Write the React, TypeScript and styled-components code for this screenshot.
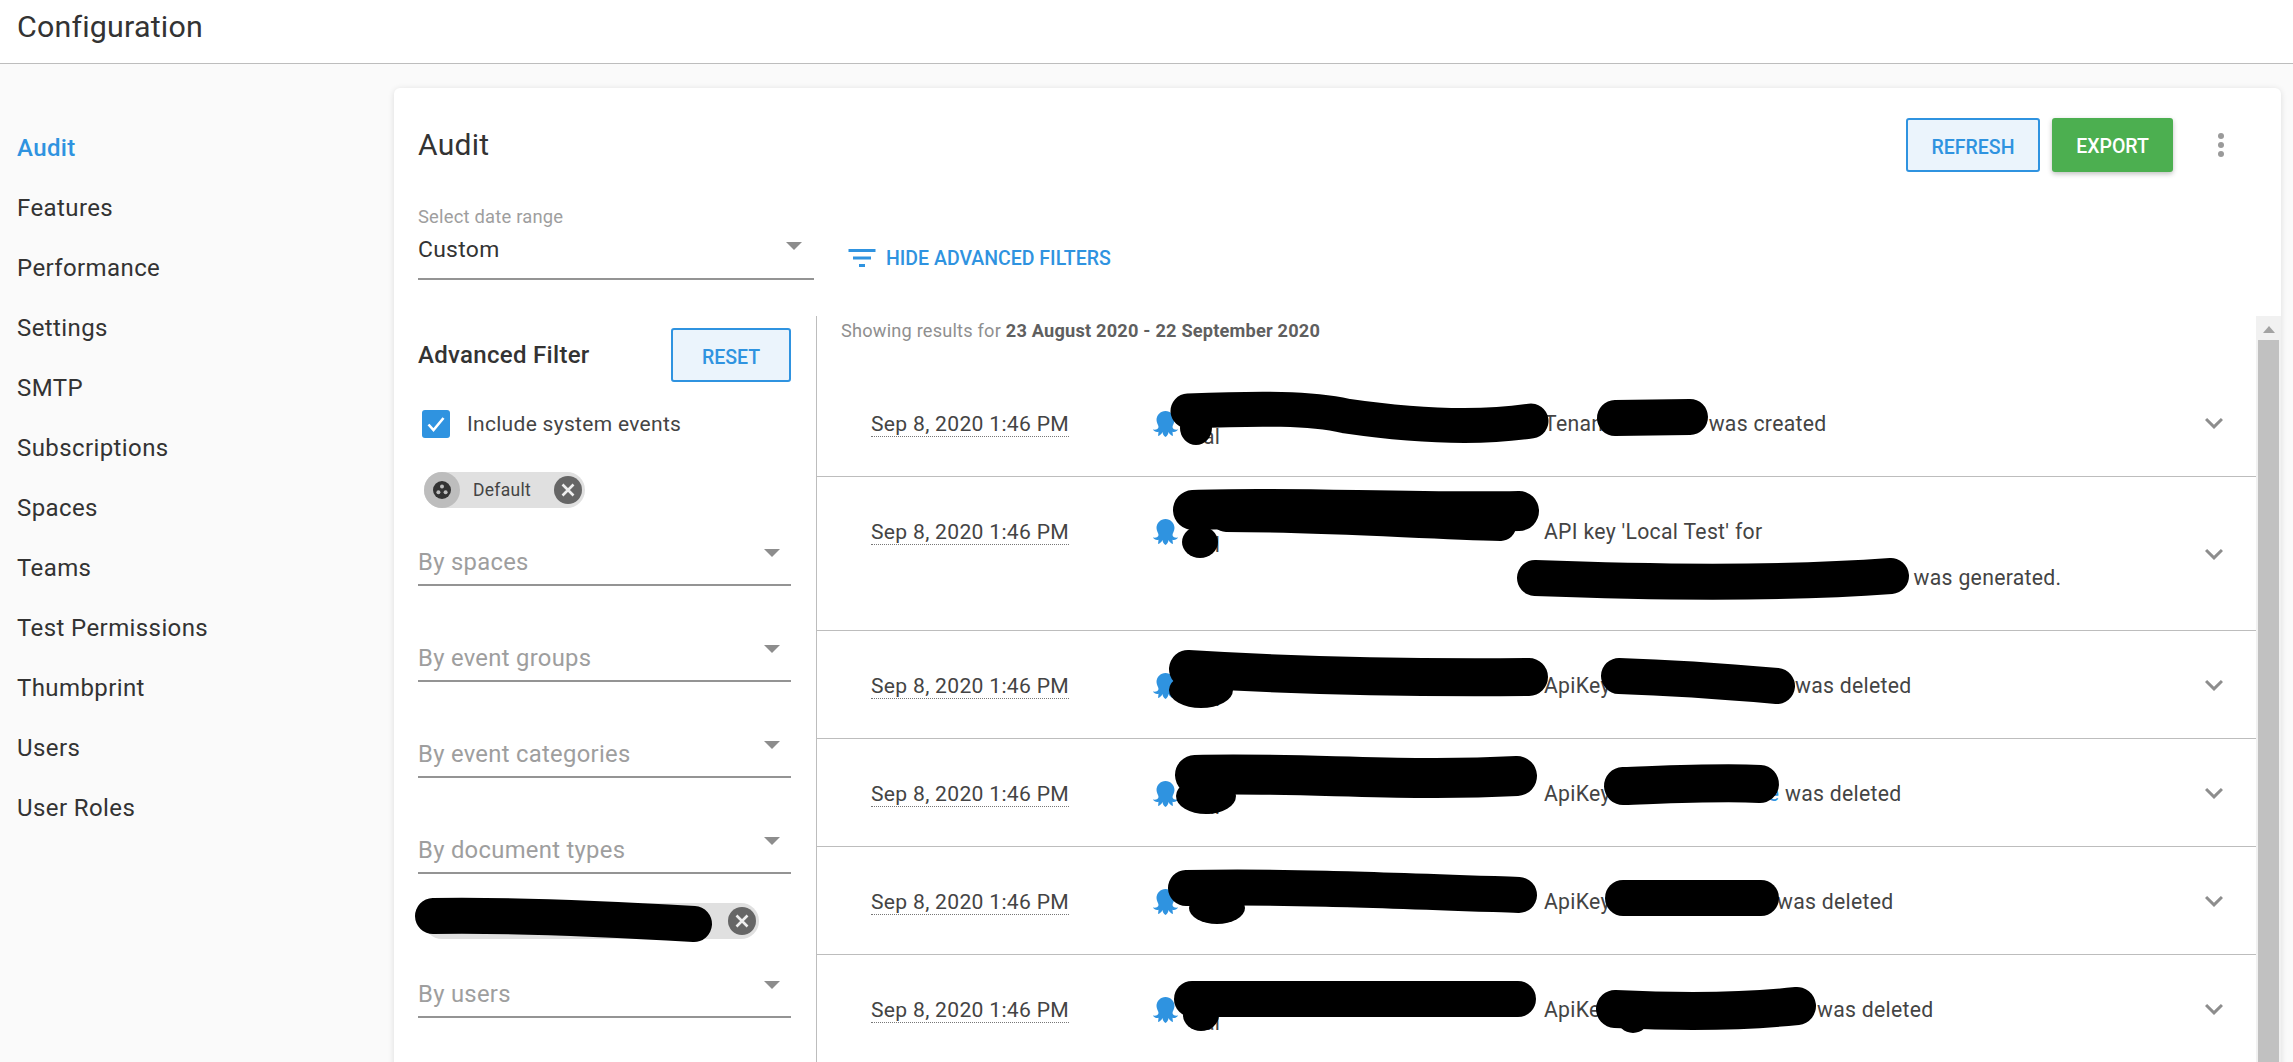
import React from "react";
import styled, { createGlobalStyle } from "styled-components";

const GlobalStyle = createGlobalStyle`
  html, body { margin: 0; padding: 0; height: 1062px; overflow: hidden; background: #fafafa; }
  body { font-family: Roboto, "Liberation Sans", sans-serif; color: #333; }
  * { box-sizing: border-box; }
`;

const Page = styled.div`
  height: 1062px;
  overflow: hidden;
  display: flex;
  flex-direction: column;
`;
const TopBar = styled.header`
  flex: none;
  height: 64px;
  background: #fff;
  border-bottom: 1px solid #bdbdbd;
  padding: 0 17px;
  display: flex;
  align-items: center;
  padding-bottom: 10px;
`;
const PageTitle = styled.h1`
  margin: 0;
  font-size: 30.4px;
  font-weight: 400;
  letter-spacing: 0.2px;
  color: #333;
`;
const Body = styled.div`
  flex: 1;
  display: flex;
  min-height: 0;
`;
const Nav = styled.nav`
  flex: none;
  width: 394px;
  padding-top: 54px;
  display: flex;
  flex-direction: column;
`;
const NavItem = styled.a<{ $active?: boolean }>`
  height: 60px;
  padding-left: 17px;
  display: flex;
  align-items: center;
  font-size: 24px;
  letter-spacing: 0.4px;
  color: ${(p) => (p.$active ? "#2f93e0" : "#333")};
  font-weight: ${(p) => (p.$active ? 500 : 400)};
`;
const Card = styled.main`
  flex: none;
  width: 1887px;
  margin-top: 24px;
  height: 1100px;
  background: #fff;
  border-radius: 6px;
  box-shadow: 0 1px 6px rgba(0, 0, 0, 0.12);
  display: flex;
  flex-direction: column;
`;
const CardHead = styled.div`
  flex: none;
  height: 54px;
  margin-top: 30px;
  padding: 0 57px 0 24px;
  display: flex;
  align-items: center;
`;
const CardTitle = styled.h2`
  margin: 0 auto 0 0;
  font-size: 30px;
  font-weight: 400;
  letter-spacing: 0.3px;
  color: #333;
  position: relative;
  top: -1px;
`;
const OutlineButton = styled.button`
  height: 54px;
  border: 2px solid #2f93e0;
  border-radius: 3px;
  background: #ebf4fc;
  color: #2f93e0;
  font: 500 19.5px Roboto, sans-serif;
  padding: 4px 0 0;
`;
const RefreshButton = styled(OutlineButton)`
  width: 134px;
`;
const ExportButton = styled.button`
  width: 121px;
  height: 54px;
  margin-left: 12px;
  border: 0;
  border-radius: 3px;
  background: #4caf50;
  color: #fff;
  font: 500 19.5px Roboto, sans-serif;
  box-shadow: 0 2px 5px rgba(0, 0, 0, 0.25);
  padding: 2px 0 0;
`;
const MoreButton = styled.div`
  width: 6px;
  margin-left: 45px;
  display: flex;
  flex-direction: column;
  gap: 3px;
`;
const MoreDot = styled.span`
  width: 6px;
  height: 6px;
  border-radius: 50%;
  background: #9a9a9a;
`;
const RangeRow = styled.div`
  flex: none;
  height: 144px;
  padding: 33px 0 0 24px;
  display: flex;
  align-items: flex-start;
`;
const RangeSelect = styled.div`
  width: 396px;
  height: 75px;
  border-bottom: 2px solid #949494;
  position: relative;
`;
const RangeLabel = styled.div`
  font-size: 18.4px;
  line-height: 24px;
  letter-spacing: 0.2px;
  color: #9e9e9e;
`;
const RangeValue = styled.div`
  font-size: 22.9px;
  line-height: 30px;
  margin-top: 6px;
  letter-spacing: 0.3px;
  color: #333;
`;
const RangeArrow = styled.span`
  position: absolute;
  right: 12px;
  top: 37px;
  width: 0;
  height: 0;
  border-left: 8px solid transparent;
  border-right: 8px solid transparent;
  border-top: 8px solid #8d8d8d;
`;
const HideFilters = styled.div`
  margin: 35px 0 0 30px;
  height: 36px;
  display: flex;
  align-items: center;
  gap: 6px;
  color: #2f93e0;
  font-size: 19.5px;
  font-weight: 500;
  text-transform: uppercase;
`;
const Content = styled.div`
  flex: 1;
  min-height: 0;
  display: flex;
`;
const FilterPanel = styled.aside`
  flex: none;
  width: 422px;
  padding: 12px 25px 0 24px;
`;
const FilterHead = styled.div`
  height: 54px;
  display: flex;
  align-items: center;
  justify-content: space-between;
`;
const FilterTitle = styled.div`
  font-size: 24px;
  font-weight: 500;
  letter-spacing: 0.3px;
  color: #333;
`;
const ResetButton = styled(OutlineButton)`
  width: 120px;
`;
const CheckRow = styled.label`
  margin: 28px 0 0 4px;
  height: 28px;
  display: flex;
  align-items: center;
  gap: 17px;
  font-size: 21px;
  letter-spacing: 0.3px;
  color: #444;
`;
const CheckBox = styled.span`
  width: 28px;
  height: 28px;
  border-radius: 3px;
  background: #2f93e0;
  display: flex;
  align-items: center;
  justify-content: center;
`;
const Chip = styled.div<{ $width: number }>`
  width: ${(p) => p.$width}px;
  height: 36px;
  margin-left: 6px;
  border-radius: 18px;
  background: #e0e0e0;
  display: flex;
  align-items: center;
  font-size: 17.5px;
  letter-spacing: 0.3px;
  color: #444;
`;
const DefaultChip = styled(Chip)`
  margin-top: 34px;
`;
const TenantChip = styled(Chip)`
  margin-top: 29px;
  position: relative;
`;
const ChipAvatar = styled.span`
  width: 36px;
  height: 36px;
  border-radius: 50%;
  background: #bdbdbd;
  display: flex;
  align-items: center;
  justify-content: center;
  margin-right: 13px;
`;
const ChipRemove = styled.span`
  margin-left: auto;
  margin-right: 3px;
  display: flex;
`;
const Field = styled.div<{ $gap: number }>`
  height: 60px;
  margin-top: ${(p) => p.$gap}px;
  border-bottom: 2px solid #949494;
  position: relative;
  display: flex;
  align-items: flex-end;
`;
const FieldText = styled.div`
  font-size: 23.8px;
  line-height: 30px;
  padding-bottom: 7px;
  letter-spacing: 0.3px;
  color: #9e9e9e;
`;
const FieldArrow = styled(RangeArrow)`
  right: 11px;
  top: 23px;
`;
const Blackout = styled.svg`
  position: absolute;
  pointer-events: none;
  overflow: visible;
`;
const ChipBlackout = styled(Blackout)`
  left: -10px;
  top: -7px;
`;
const Results = styled.section`
  flex: none;
  width: 1465px;
  display: flex;
  border-left: 1px solid #bdbdbd;
  min-height: 0;
`;
const ResultList = styled.div`
  flex: 1;
  min-width: 0;
`;
const ResultCaption = styled.div`
  height: 53px;
  padding: 3px 0 0 24px;
  font-size: 18.2px;
  line-height: 24px;
  letter-spacing: 0.2px;
  color: #8f8f8f;
  b {
    font-weight: 700;
    color: #5f5f5f;
  }
`;
const EventRow = styled.div<{ $height: number }>`
  position: relative;
  height: ${(p) => p.$height}px;
  border-bottom: 1px solid #bdbdbd;
  display: grid;
  grid-template-columns: 336px 391px 1fr 84px;
`;
const DateCell = styled.div`
  padding: 43px 0 0 54px;
`;
const DateText = styled.span`
  font-size: 21.1px;
  line-height: 24px;
  display: inline-block;
  letter-spacing: 0.3px;
  color: #444;
  border-bottom: 1px dotted #777;
`;
const ActorCell = styled.div`
  padding-top: 42px;
  display: flex;
  align-items: flex-start;
`;
const ActorName = styled.span`
  font-size: 21.2px;
  line-height: 24px;
  margin: 14px 0 0 25px;
  color: #444;
  letter-spacing: 0.3px;
`;
const Message = styled.div`
  padding-top: 32px;
  font-size: 21.2px;
  line-height: 46px;
  letter-spacing: 0.3px;
  color: #444;
  white-space: nowrap;
`;
const Ident = styled.span<{ $width: number }>`
  display: inline-block;
  width: ${(p) => p.$width}px;
  text-align: right;
  color: #2f93e0;
  vertical-align: bottom;
`;
const ExpandCell = styled.div`
  display: flex;
  align-items: center;
  justify-content: center;
`;
const RowBlackout = styled(Blackout)`
  left: 0;
  top: 0;
`;
const ScrollTrack = styled.div`
  flex: none;
  width: 25px;
  background: #f1f1f1;
  display: flex;
  flex-direction: column;
  align-items: center;
`;
const ScrollUp = styled.span`
  margin: 10px 0 7px;
  width: 0;
  height: 0;
  border-left: 6px solid transparent;
  border-right: 6px solid transparent;
  border-bottom: 7px solid #a3a3a3;
`;
const ScrollThumb = styled.div`
  width: 21px;
  flex: 1;
  background: #c1c1c1;
`;

const Octopus = () => (
  <svg width="25" height="26" viewBox="0 0 25 26" style={{ flex: "none" }}>
    <path
      fill="#2f93e0"
      d="M12.5 0C17.5 0 21.5 4 21.5 9C21.5 12 19.5 14 19.5 16C19.5 18 22 19 25 18.5C24 20.5 21.5 21.5 19.5 20.8C19.5 22 19.8 23.5 20 25C18 24.5 16.5 23 15.5 21C15.3 23 14.5 24.8 12.5 26C10.5 24.8 9.7 23 9.5 21C8.5 23 7 24.5 5 25C5.2 23.5 5.5 22 5.5 20.8C3.5 21.5 1 20.5 0 18.5C3 19 5.5 18 5.5 16C5.5 14 3.5 12 3.5 9C3.5 4 7.5 0 12.5 0z"
    />
  </svg>
);

const Check = () => (
  <svg width="22" height="22" viewBox="0 0 22 22">
    <path d="M3.5 11.5l5 5.5L18.5 5" fill="none" stroke="#fff" strokeWidth="2.6" />
  </svg>
);

const SpaceGlyph = () => (
  <svg width="18" height="18" viewBox="0 0 18 18">
    <circle cx="9" cy="9" r="9" fill="#333" />
    <circle cx="9" cy="5.6" r="2" fill="#bdbdbd" />
    <circle cx="5.4" cy="11.2" r="2" fill="#bdbdbd" />
    <circle cx="12.6" cy="11.2" r="2" fill="#bdbdbd" />
  </svg>
);

const RemoveGlyph = () => (
  <svg width="28" height="28" viewBox="0 0 28 28">
    <circle cx="14" cy="14" r="14" fill="#666" />
    <path d="M8.5 8.5l11 11M19.5 8.5l-11 11" stroke="#eee" strokeWidth="2.6" />
  </svg>
);

const FilterGlyph = () => (
  <svg width="36" height="36" viewBox="0 0 24 24">
    <path fill="#2f93e0" d="M10 18h4v-2h-4v2zM3 6v2h18V6H3zm3 7h12v-2H6v2z" />
  </svg>
);

const ExpandMore = () => (
  <svg width="36" height="36" viewBox="0 0 24 24">
    <path fill="#8d8d8d" d="M16.59 8.59L12 13.17 7.41 8.59 6 10l6 6 6-6z" />
  </svg>
);

type Ink = { d: string; w: number } | { cx: number; cy: number; rx: number; ry: number };

const Ink = ({ top, height, marks }: { top: number; height: number; marks: Ink[] }) => (
  <RowBlackout width="1440" height={height} viewBox={`816 ${top} 1440 ${height}`}>
    {marks.map((m, i) =>
      "d" in m ? (
        <path key={i} d={m.d} fill="none" stroke="#000" strokeWidth={m.w} strokeLinecap="round" strokeLinejoin="round" />
      ) : (
        <ellipse key={i} cx={m.cx} cy={m.cy} rx={m.rx} ry={m.ry} fill="#000" />
      )
    )}
  </RowBlackout>
);

const navItems = [
  "Audit", "Features", "Performance", "Settings", "SMTP", "Subscriptions",
  "Spaces", "Teams", "Test Permissions", "Thumbprint", "Users", "User Roles",
];

const events: {
  top: number;
  height: number;
  message: React.ReactNode;
  marks: Ink[];
}[] = [
  {
    top: 369,
    height: 108,
    message: (
      <>
        Tenant <Ident $width={87}>&nbsp;</Ident> was created
      </>
    ),
    marks: [
      { d: "M1187 411C1260 408 1310 408 1345 416C1400 424 1470 430 1530 421", w: 35 },
      { cx: 1195, cy: 428, rx: 16, ry: 17 },
      { d: "M1614 418L1689 417", w: 36 },
    ],
  },
  {
    top: 477,
    height: 154,
    message: (
      <>
        API key 'Local Test' for
        <br />
        <Ident $width={364}>&nbsp;</Ident> was generated.
      </>
    ),
    marks: [
      { d: "M1192 510C1280 506 1400 513 1518 511", w: 40 },
      { d: "M1225 517C1320 517 1420 524 1500 526", w: 30 },
      { cx: 1199, cy: 542, rx: 18, ry: 16 },
      { d: "M1534 578C1640 582 1780 584 1890 576", w: 36 },
    ],
  },
  {
    top: 631,
    height: 108,
    message: (
      <>
        ApiKey <Ident $width={173}>&nbsp;</Ident> was deleted
      </>
    ),
    marks: [
      { d: "M1187 669C1300 676 1420 678 1528 677", w: 38 },
      { cx: 1200, cy: 690, rx: 32, ry: 18 },
      { d: "M1618 676C1680 678 1730 682 1776 686", w: 36 },
    ],
  },
  {
    top: 739,
    height: 108,
    message: (
      <>
        ApiKey <Ident $width={163}>e</Ident> was deleted
      </>
    ),
    marks: [
      { d: "M1194 775C1300 772 1400 782 1516 776", w: 40 },
      { cx: 1205, cy: 796, rx: 30, ry: 18 },
      { d: "M1622 786C1680 784 1720 782 1759 784", w: 38 },
    ],
  },
  {
    top: 847,
    height: 108,
    message: (
      <>
        ApiKey <Ident $width={155}>&nbsp;</Ident> was deleted
      </>
    ),
    marks: [
      { d: "M1185 888C1280 886 1380 890 1518 895", w: 36 },
      { cx: 1216, cy: 908, rx: 28, ry: 16 },
      { d: "M1622 898L1760 898", w: 36 },
    ],
  },
  {
    top: 955,
    height: 108,
    message: (
      <>
        ApiKey <Ident $width={195}>&nbsp;</Ident> was deleted
      </>
    ),
    marks: [
      { d: "M1191 999L1517 999", w: 36 },
      { cx: 1200, cy: 1015, rx: 18, ry: 16 },
      { d: "M1614 1009C1680 1012 1740 1012 1796 1006", w: 38 },
      { cx: 1632, cy: 1018, rx: 16, ry: 15 },
    ],
  },
];

export default function App() {
  return (
    <Page>
      <GlobalStyle />
      <TopBar>
        <PageTitle>Configuration</PageTitle>
      </TopBar>
      <Body>
        <Nav>
          {navItems.map((n, i) => (
            <NavItem key={n} $active={i === 0}>
              {n}
            </NavItem>
          ))}
        </Nav>
        <Card>
          <CardHead>
            <CardTitle>Audit</CardTitle>
            <RefreshButton>REFRESH</RefreshButton>
            <ExportButton>EXPORT</ExportButton>
            <MoreButton>
              <MoreDot />
              <MoreDot />
              <MoreDot />
            </MoreButton>
          </CardHead>
          <RangeRow>
            <RangeSelect>
              <RangeLabel>Select date range</RangeLabel>
              <RangeValue>Custom</RangeValue>
              <RangeArrow />
            </RangeSelect>
            <HideFilters>
              <FilterGlyph />
              Hide advanced filters
            </HideFilters>
          </RangeRow>
          <Content>
            <FilterPanel>
              <FilterHead>
                <FilterTitle>Advanced Filter</FilterTitle>
                <ResetButton>RESET</ResetButton>
              </FilterHead>
              <CheckRow>
                <CheckBox>
                  <Check />
                </CheckBox>
                Include system events
              </CheckRow>
              <DefaultChip $width={161}>
                <ChipAvatar>
                  <SpaceGlyph />
                </ChipAvatar>
                Default
                <ChipRemove>
                  <RemoveGlyph />
                </ChipRemove>
              </DefaultChip>
              <Field $gap={18}>
                <FieldText>By spaces</FieldText>
                <FieldArrow />
              </Field>
              <Field $gap={36}>
                <FieldText>By event groups</FieldText>
                <FieldArrow />
              </Field>
              <Field $gap={36}>
                <FieldText>By event categories</FieldText>
                <FieldArrow />
              </Field>
              <Field $gap={36}>
                <FieldText>By document types</FieldText>
                <FieldArrow />
              </Field>
              <TenantChip $width={335}>
                <ChipBlackout width="300" height="44" viewBox="0 0 300 44">
                  <path
                    d="M19 20C80 19 160 21 280 28"
                    fill="none"
                    stroke="#000"
                    strokeWidth="36"
                    strokeLinecap="round"
                  />
                </ChipBlackout>
                <ChipRemove>
                  <RemoveGlyph />
                </ChipRemove>
              </TenantChip>
              <Field $gap={19}>
                <FieldText>By users</FieldText>
                <FieldArrow />
              </Field>
            </FilterPanel>
            <Results>
              <ResultList>
                <ResultCaption>
                  Showing results for <b>23 August 2020 - 22 September 2020</b>
                </ResultCaption>
                {events.map((e) => (
                  <EventRow key={e.top} $height={e.height}>
                    <DateCell>
                      <DateText>Sep 8, 2020 1:46 PM</DateText>
                    </DateCell>
                    <ActorCell>
                      <Octopus />
                      <ActorName>al</ActorName>
                    </ActorCell>
                    <Message>{e.message}</Message>
                    <ExpandCell>
                      <ExpandMore />
                    </ExpandCell>
                    <Ink top={e.top} height={e.height} marks={e.marks} />
                  </EventRow>
                ))}
              </ResultList>
              <ScrollTrack>
                <ScrollUp />
                <ScrollThumb />
              </ScrollTrack>
            </Results>
          </Content>
        </Card>
      </Body>
    </Page>
  );
}
